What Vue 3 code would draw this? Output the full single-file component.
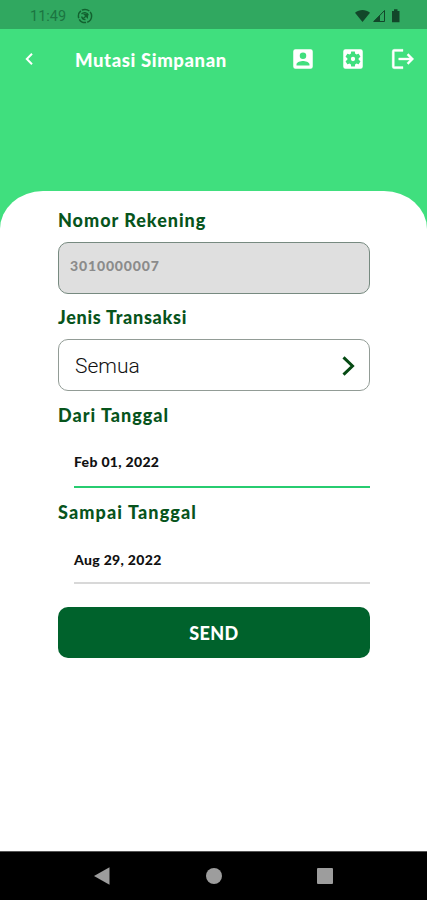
<script setup>
import { ref } from 'vue'

const account = ref('3010000007')
const kind = ref('Semua')
const fromDate = ref('Feb 01, 2022')
const toDate = ref('Aug 29, 2022')
</script>

<template>
  <div class="screen">
    <div class="status">
      <span class="clock">11:49</span>
      <svg class="badge" width="16" height="16" viewBox="0 0 16 16" fill="none" stroke="#12622f">
        <circle cx="8" cy="8" r="6.6" stroke-width="1.5" stroke-dasharray="8 1.2" />
        <path d="M4.500 6.200C6 4 10.300 4 11.300 7.200M4.600 8.500c.6 2.200 2.200 3.200 3.900 3" stroke-width="1.3" />
        <path d="M5.500 5.500l5.700.2-.3 5.300-1.900-2-2.300 2-.9-.9 2.300-2z" fill="#12622f" stroke="none" />
      </svg>
      <svg class="signals" width="50" height="16" viewBox="0 0 50 16" fill="#12472a">
        <path d="M0 4.700C4.500 1 10.500 1 15 4.700L7.500 14z" />
        <path d="M29.500 2.500v11H19z" fill="none" stroke="#12472a" stroke-width="1" />
        <path d="M25 6.900v6.800h-7z" />
        <path d="M37 3h2V1.300h3.500V3h2v11.200H37z" />
      </svg>
    </div>
    <header class="bar">
      <svg class="back" width="10" height="14" viewBox="0 0 10 14" fill="none" stroke="#fff" stroke-width="2">
        <path d="M8 1.700L2.800 7 8 12.300" />
      </svg>
      <h1 class="title">Mutasi Simpanan</h1>
      <nav class="actions">
        <svg width="26" height="26" viewBox="0 0 24 24" fill="#fff">
          <path d="M3 5v14a2 2 0 0 0 2 2h14a2 2 0 0 0 2-2V5a2 2 0 0 0-2-2H5a2 2 0 0 0-2 2zm12 4a3 3 0 1 1-6 0 3 3 0 0 1 6 0zm-9 8c0-2 4-3.100 6-3.100s6 1.100 6 3.100v1H6z" />
        </svg>
        <svg width="26" height="26" viewBox="0 0 24 24" fill="#fff">
          <path d="M12 10a2 2 0 1 0 0 4 2 2 0 0 0 0-4zm7-7H5a2 2 0 0 0-2 2v14a2 2 0 0 0 2 2h14a2 2 0 0 0 2-2V5a2 2 0 0 0-2-2zm-1.750 9c0 .230-.020.460-.050.680l1.480 1.160c.130.110.170.300.080.450l-1.400 2.420c-.090.150-.270.210-.430.150l-1.740-.700c-.360.280-.760.510-1.180.690l-.260 1.850c-.030.170-.180.300-.350.300h-2.800c-.170 0-.320-.130-.350-.290l-.260-1.850c-.430-.180-.820-.410-1.180-.690l-1.740.700c-.160.060-.340 0-.430-.150l-1.400-2.420c-.090-.150-.050-.340.080-.450l1.480-1.160A5.400 5.400 0 0 1 6.750 12c0-.230.020-.460.050-.690l-1.480-1.160a.35.35 0 0 1-.080-.450l1.400-2.420c.090-.150.270-.210.430-.150l1.740.700c.360-.280.760-.510 1.180-.690l.260-1.850c.030-.160.180-.290.350-.290h2.800c.170 0 .320.130.350.290l.260 1.850c.430.180.820.410 1.180.690l1.740-.700c.160-.060.340 0 .430.150l1.400 2.420c.090.150.050.340-.080.450l-1.480 1.160c.030.230.050.460.050.690z" />
        </svg>
        <svg width="26" height="26" viewBox="0 0 24 24" fill="#fff" stroke="#fff" stroke-width=".3">
          <path d="M17 7l-1.400 1.400L18.200 11H8v2h10.200l-2.600 2.600L17 17l5-5zM4 5h8V3H4a2 2 0 0 0-2 2v14a2 2 0 0 0 2 2h8v-2H4z" />
        </svg>
      </nav>
    </header>
    <main class="sheet">
      <label class="label nomor">Nomor Rekening</label>
      <div class="box locked"><span class="account">{{ account }}</span></div>
      <label class="label jenis">Jenis Transaksi</label>
      <div class="box choice">
        <span class="kind">{{ kind }}</span>
        <svg width="14" height="20" viewBox="0 0 14 20" fill="none" stroke="#064a14" stroke-width="3">
          <path d="M1.500 1.300L10.500 10l-9 8.700" />
        </svg>
      </div>
      <label class="label dari">Dari Tanggal</label>
      <div class="date active">{{ fromDate }}</div>
      <label class="label sampai">Sampai Tanggal</label>
      <div class="date">{{ toDate }}</div>
      <button class="send">SEND</button>
    </main>
    <footer class="keys">
      <svg width="18" height="20" viewBox="0 0 18 20" fill="#9d9d9d"><path d="M1 10L16.500 1.200v17.600z" /></svg>
      <svg width="18" height="18" viewBox="0 0 18 18" fill="#9d9d9d"><circle cx="9" cy="9" r="8" /></svg>
      <svg width="18" height="18" viewBox="0 0 18 18" fill="#9d9d9d"><rect x="1" y="1" width="16" height="16" rx="1" /></svg>
    </footer>
  </div>
</template>

<style>
body {
  margin: 0;
}
</style>

<style scoped>
.screen {
  width: 427px;
  height: 900px;
  display: flex;
  flex-direction: column;
  background: #40df7e;
  font-family: Lato, sans-serif;
  overflow: hidden;
}
.status {
  height: 29px;
  flex: none;
  box-sizing: border-box;
  padding: 3px 22px 0 30px;
  display: flex;
  align-items: center;
  background: #30a860;
}
.clock {
  width: 47px;
  font: 14.5px/20px Roboto, sans-serif;
  color: #1b7541;
  padding-top: 1px;
}
.signals {
  margin-left: auto;
}
.bar {
  height: 60px;
  flex: none;
  box-sizing: border-box;
  padding: 0 11.5px 0 24px;
  display: flex;
  align-items: center;
  margin-bottom: 102px;
}
.title {
  margin: 1px 0 0 41px;
  font-size: 18.5px;
  line-height: 24px;
  font-weight: 900;
  letter-spacing: 0.6px;
  color: #fff;
  white-space: nowrap;
}
.actions {
  display: flex;
  gap: 24px;
  margin-left: auto;
}
.sheet {
  flex: 1;
  box-sizing: border-box;
  padding: 17px 57px 0 58px;
  display: flex;
  flex-direction: column;
  background: #fff;
  border-radius: 43px 43px 0 0 / 38px 38px 0 0;
}
.label {
  height: 24px;
  flex: none;
  font-size: 18px;
  line-height: 24px;
  font-weight: 900;
  color: #07541c;
  white-space: nowrap;
}
.nomor {
  letter-spacing: 0.97px;
}
.jenis {
  letter-spacing: 0.7px;
}
.dari {
  letter-spacing: 1px;
}
.sampai {
  letter-spacing: 1.12px;
}
.box {
  height: 52px;
  flex: none;
  box-sizing: border-box;
  margin: 10px 0 12px;
  border: 1px solid #929c96;
  border-radius: 10px;
  display: flex;
}
.locked {
  margin-bottom: 11px;
  background: #dfdfdf;
  border-color: #778a80;
  padding: 13px 11px 0;
}
.choice {
  align-items: center;
  justify-content: space-between;
  padding: 1px 13px 0 16px;
}
.account {
  font-size: 14px;
  line-height: 20px;
  font-weight: 900;
  letter-spacing: 0.85px;
  color: #8b8b8b;
}
.kind {
  font: 300 21px/26px Roboto, sans-serif;
  color: #111;
}
.date {
  height: 60px;
  flex: none;
  box-sizing: border-box;
  margin: 0 0 12px 16px;
  padding-top: 26px;
  border-bottom: 2px solid #d8d8d8;
  font-size: 14px;
  line-height: 20px;
  font-weight: 900;
  letter-spacing: 0.32px;
  color: #111;
}
.active {
  height: 61px;
  padding-top: 25px;
  border-bottom-color: #27cc70;
}
.send {
  height: 51px;
  flex: none;
  margin: 11px 0 0;
  padding: 1px 0 0;
  border: 0;
  border-radius: 10px;
  background: #00622c;
  color: #fff;
  font: 900 18px/50px Lato, sans-serif;
  letter-spacing: 0.4px;
}
.keys {
  height: 49px;
  flex: none;
  box-sizing: border-box;
  border-top: 1px solid #555;
  padding: 0 93px;
  display: flex;
  align-items: center;
  justify-content: space-between;
  background: #000;
}
</style>
